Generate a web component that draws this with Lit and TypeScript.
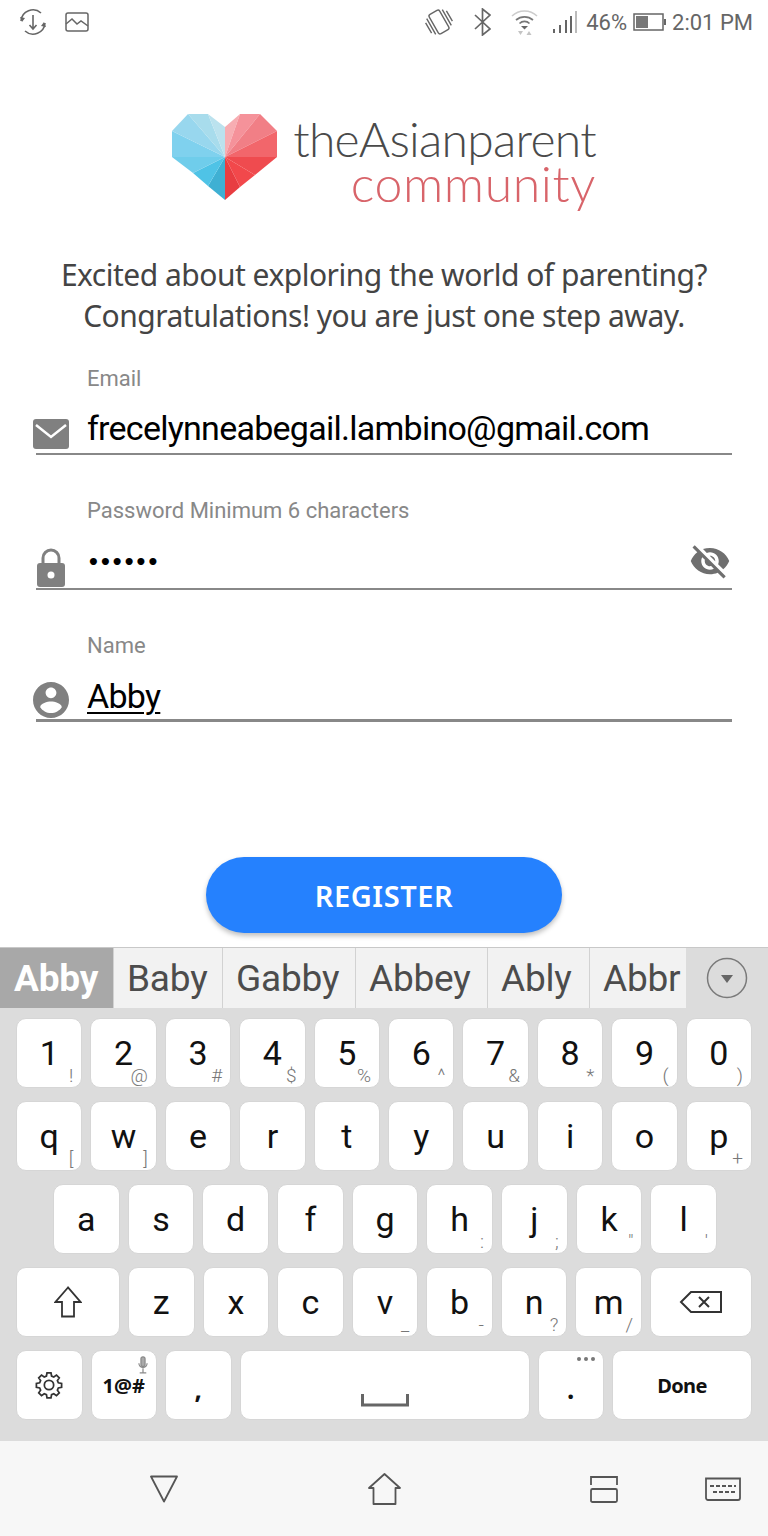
import { html, css, svg, LitElement } from "lit";
import { customElement } from "lit/decorators.js";

const leftFacets = [
  ["225,157 225,200 208,186", "#3fb0d3"],
  ["225,157 208,186 193,173", "#4fc3e6"],
  ["225,157 193,173 172,157", "#6fcdeb"],
  ["225,157 172,157 172,131", "#7fd1ee"],
  ["225,157 172,131 188,114", "#98d7ee"],
  ["225,157 188,114 208,114", "#a8dcec"],
  ["225,157 208,114 225,127", "#bbe2ee"],
];
const rightFacets = [
  ["225,157 225,127 240,114", "#f7adb2"],
  ["225,157 240,114 260,114", "#f5929a"],
  ["225,157 260,114 277,131", "#f17f86"],
  ["225,157 277,131 277,157", "#f2666b"],
  ["225,157 277,157 255,175", "#ef4b4f"],
  ["225,157 255,175 240,187", "#f2484b"],
  ["225,157 240,187 225,200", "#e83d41"],
];

const suggestions = [
  ["Baby", 109],
  ["Gabby", 133],
  ["Abbey", 132],
  ["Ably", 102],
  ["Abbr", 97],
] as const;

const numberRow = [
  ["1", "!"], ["2", "@"], ["3", "#"], ["4", "$"], ["5", "%"],
  ["6", "^"], ["7", "&"], ["8", "*"], ["9", "("], ["0", ")"],
];
const topRow = [
  ["q", "["], ["w", "]"], ["e", ""], ["r", ""], ["t", ""],
  ["y", ""], ["u", ""], ["i", ""], ["o", ""], ["p", "+"],
];
const homeRow = [
  ["a", ""], ["s", ""], ["d", ""], ["f", ""], ["g", ""],
  ["h", ":"], ["j", ";"], ["k", '"'], ["l", "'"],
];
const bottomRow = [
  ["z", ""], ["x", ""], ["c", ""], ["v", "_"],
  ["b", "-"], ["n", "?"], ["m", "/"],
];

@customElement("app-root")
export class AppRoot extends LitElement {
  static styles = css`
    :host {
      display: block;
      width: 768px;
      height: 1536px;
      background: #fff;
      font-family: Roboto, sans-serif;
      overflow: hidden;
    }

    .status {
      display: flex;
      align-items: center;
      height: 44px;
      color: #666;
      font-size: 22px;
    }
    .status svg {
      display: block;
      flex: none;
    }
    .status-left {
      display: flex;
      align-items: center;
      gap: 18px;
      padding-left: 19px;
    }
    .status-right {
      display: flex;
      align-items: center;
      margin-left: auto;
      padding-right: 15px;
    }
    .ml20 { margin-left: 20px; }
    .ml15 { margin-left: 15px; }
    .ml9 { margin-left: 9px; }
    .ml6 { margin-left: 6px; }

    .logo {
      display: flex;
      align-items: flex-start;
      padding: 68px 0 0 170px;
      height: 118px;
    }
    .logo-text {
      display: flex;
      flex-direction: column;
      align-items: flex-end;
      margin-left: 14px;
      padding-top: 5px;
      font-family: Lato, sans-serif;
      font-weight: 300;
      line-height: 44px;
      color: #4a4a4a;
      width: 302px;
    }
    .logo-text .main {
      font-size: 48px;
      letter-spacing: -0.7px;
    }
    .logo-text .sub {
      font-size: 50px;
      letter-spacing: 0.6px;
      color: #d8646a;
    }

    .intro {
      margin: 24px 0 0;
      text-align: center;
      font-family: "Noto Sans", sans-serif;
      font-size: 30px;
      letter-spacing: -0.5px;
      line-height: 41px;
      color: #444;
      height: 111px;
    }

    .form {
      display: flex;
      flex-direction: column;
      gap: 42px;
      margin: 0 36px;
    }
    .field {
      border-bottom: 2px solid #888;
    }
    .field.active {
      border-bottom-width: 3px;
    }
    .label {
      height: 28px;
      line-height: 28px;
      padding-left: 51px;
      font-size: 22px;
      color: #888;
    }
    .row {
      display: flex;
      align-items: center;
      height: 59px;
    }
    .row.first {
      height: 60px;
    }
    .row.tall {
      height: 63px;
    }
    .row svg {
      display: block;
      flex: none;
    }
    .lead {
      display: flex;
      align-self: flex-end;
      flex: none;
      width: 54px;
      margin-left: -3px;
      margin-bottom: 1px;
    }
    .first .lead {
      margin-bottom: 4px;
    }
    .value {
      flex: 1;
      padding-top: 10px;
      font-size: 34px;
      letter-spacing: -0.74px;
      color: #000;
    }
    .active .value {
      padding-top: 13px;
    }
    .value u {
      text-underline-offset: 4px;
      text-decoration-thickness: 2px;
    }
    .value.dots {
      font-size: 20px;
      letter-spacing: -0.9px;
      font-family: "DejaVu Sans", sans-serif;
      font-weight: 700;
    }
    .eye {
      margin: 8px 1px 0 0;
    }

    .submit {
      display: flex;
      justify-content: center;
      margin-top: 135px;
    }
    .submit button {
      width: 356px;
      height: 76px;
      border: none;
      border-radius: 38px;
      background: #2581fe;
      color: #fff;
      font-family: "Noto Sans", sans-serif;
      font-weight: 600;
      font-size: 29px;
      letter-spacing: 0.6px;
      box-shadow: 0 3px 5px rgba(0, 0, 0, 0.25);
    }

    .keyboard {
      margin-top: 14px;
      height: 494px;
      background: #dcdcdc;
      border-top: 1px solid #c8c8c8;
      box-sizing: border-box;
    }
    .suggestions {
      display: flex;
      align-items: stretch;
      height: 60px;
      font-size: 37px;
      letter-spacing: -0.2px;
      color: #4c4c4c;
    }
    .suggestion {
      position: relative;
      display: flex;
      align-items: center;
      box-sizing: border-box;
      padding-left: 13px;
      background: #f2f2f2;
      border-left: 1px solid #d2d2d2;
      overflow: hidden;
      white-space: nowrap;
    }
    .suggestion.current {
      width: 113px;
      padding-left: 14px;
      background: #a8a8a8;
      color: #fff;
      font-weight: 700;
      border-left: none;
    }
    .suggestion:last-of-type::after {
      content: "";
      position: absolute;
      top: 0;
      right: 0;
      bottom: 0;
      width: 14px;
      background: linear-gradient(to right, rgba(242, 242, 242, 0), #f2f2f2);
    }
    .more {
      flex: 1;
      display: flex;
      align-items: center;
      justify-content: center;
    }

    .keys {
      display: flex;
      flex-direction: column;
      gap: 13px;
      padding: 10px 16px 0;
    }
    .key-row {
      display: flex;
      gap: 8px;
      height: 70px;
    }
    .key-row.inset {
      padding: 0 35px 0 37px;
    }
    .key {
      position: relative;
      flex: 1 1 0;
      display: flex;
      align-items: center;
      justify-content: center;
      box-sizing: border-box;
      min-width: 0;
      background: #fff;
      border: 1px solid #d6d6d6;
      border-radius: 10px;
      font-size: 34px;
      color: #111;
    }
    .key.shift { flex: none; width: 104px; }
    .key.back { flex: none; width: 102px; }
    .key.space { flex: none; width: 290px; }
    .key.done { flex: none; width: 140px; letter-spacing: -0.6px; }
    .key.bold {
      font-family: "Noto Sans", sans-serif;
      font-size: 20px;
      font-weight: 700;
    }
    .key.mark {
      align-items: flex-end;
      padding-bottom: 12px;
      font-family: "Noto Sans", sans-serif;
      font-size: 26px;
      font-weight: 700;
    }
    .legend {
      position: absolute;
      right: 8px;
      bottom: 0;
      font-size: 19px;
      font-weight: 300;
      color: #777;
    }
    .corner {
      position: absolute;
      top: 5px;
      right: 7px;
      display: block;
    }
    .space-mark {
      position: absolute;
      left: 120px;
      bottom: 12px;
      display: block;
    }

    .nav {
      display: flex;
      align-items: center;
      height: 95px;
      padding-left: 150px;
      background: #f7f7f7;
    }
    .nav svg {
      display: block;
      flex: none;
    }
    .nav .to-home { margin-left: 190px; }
    .nav .to-recent { margin-left: 189px; }
    .nav .to-kbd { margin-left: 87px; }
  `;

  renderHeart() {
    return html`<svg width="110" height="90" viewBox="170 112 110 90">
      ${[...leftFacets, ...rightFacets].map(
        ([points, fill]) => svg`<polygon points="${points}" fill="${fill}" />`,
      )}
    </svg>`;
  }

  renderKey([label, legend]: string[]) {
    return html`<div class="key">
      ${label}${legend ? html`<span class="legend">${legend}</span>` : ""}
    </div>`;
  }

  render() {
    return html`
      <div class="status">
        <div class="status-left">
          <svg width="28" height="28" viewBox="0 0 28 28" fill="none" stroke="#666" stroke-width="1.600">
            <path d="M2 13a12 12 0 0 1 20-8M26 15a12 12 0 0 1-20 8" />
            <path d="M14 7v14M10.500 17l3.500 4 3.500-4" />
            <path d="M1 9l5 1-3 4zM27 19l-5-1 3-4z" fill="#666" stroke="none" />
          </svg>
          <svg width="24" height="20" viewBox="0 0 24 20" fill="none" stroke="#666" stroke-width="1.500">
            <rect x="1" y="1" width="22" height="18" rx="2" />
            <path d="M1 12l6-5 5 5 4-3 7 5" />
          </svg>
        </div>
        <div class="status-right">
          <svg width="30" height="30" viewBox="0 0 30 30" fill="none" stroke="#666" stroke-width="1.400">
            <g transform="rotate(-30 15 15)">
              <rect x="9" y="4" width="12" height="22" rx="2" />
              <path d="M6 6v18M3 9v12M24 6v18M27 9v12" />
            </g>
          </svg>
          <svg class="ml20" width="17" height="28" viewBox="0 0 17 28" fill="none" stroke="#666" stroke-width="1.700">
            <path d="M1 7l15 14-7.500 6V1L16 7 1 21" />
          </svg>
          <svg class="ml20" width="27" height="26" viewBox="0 0 27 26" fill="none">
            <path d="M1 7a18 18 0 0 1 25 0" stroke="#ccc" stroke-width="1.500" />
            <path d="M5 11a13 13 0 0 1 17 0" stroke="#777" stroke-width="1.700" />
            <path d="M8.500 14.500a7 7 0 0 1 10 0" stroke="#777" stroke-width="1.700" />
            <path d="M10 17h7l-3.500 3.500z" fill="#666" />
            <path d="M7 22h5l-2.500 4zM18 22l2.500 4h-5z" fill="#c4c4c4" />
          </svg>
          <svg class="ml15" width="24" height="22" viewBox="0 0 24 22" fill="#666">
            <rect x="0" y="18" width="2" height="4" />
            <rect x="6" y="14" width="2" height="8" />
            <rect x="12" y="9" width="2" height="13" />
            <rect x="17" y="5" width="2" height="17" />
            <rect x="22" y="0" width="2" height="22" fill="#bbb" />
          </svg>
          <span class="ml9">46%</span>
          <svg class="ml6" width="33" height="18" viewBox="0 0 33 18" fill="none">
            <rect x="1" y="1" width="29" height="16" stroke="#666" stroke-width="1.500" />
            <rect x="3" y="3" width="12" height="12" fill="#777" />
            <rect x="31" y="6" width="2" height="6" fill="#666" />
          </svg>
          <span class="ml6">2:01 PM</span>
        </div>
      </div>

      <div class="logo">
        ${this.renderHeart()}
        <div class="logo-text">
          <span class="main">theAsianparent</span>
          <span class="sub">community</span>
        </div>
      </div>

      <p class="intro">
        Excited about exploring the world of parenting?<br />
        Congratulations! you are just one step away.
      </p>

      <div class="form">
        <div class="field">
          <div class="label">Email</div>
          <div class="row first">
            <div class="lead">
              <svg width="36" height="30" viewBox="0 0 36 30">
                <rect width="36" height="30" rx="3" fill="#808080" />
                <path d="M3 6l15 12L33 6" fill="none" stroke="#fff" stroke-width="2.500" />
              </svg>
            </div>
            <div class="value">frecelynneabegail.lambino@gmail.com</div>
          </div>
        </div>
        <div class="field">
          <div class="label">Password Minimum 6 characters</div>
          <div class="row tall">
            <div class="lead">
              <svg width="36" height="39" viewBox="0 0 36 39">
                <path d="M10 17V10a8 8 0 0 1 16 0v7" fill="none" stroke="#808080" stroke-width="3" />
                <rect x="4" y="15" width="28" height="24" rx="3" fill="#808080" />
                <circle cx="18" cy="27" r="3.500" fill="#fff" />
              </svg>
            </div>
            <div class="value dots">••••••</div>
            <svg class="eye" width="42" height="42" viewBox="0 0 24 24" fill="#6f6f6f">
              <path d="M12 7c2.760 0 5 2.240 5 5 0 .65-.13 1.260-.36 1.830l2.920 2.920c1.510-1.260 2.700-2.890 3.430-4.750-1.730-4.390-6-7.500-11-7.500-1.400 0-2.740.25-3.980.7l2.160 2.160C10.740 7.130 11.350 7 12 7zM2 4.270l2.280 2.280.46.46C3.080 8.300 1.780 10.020 1 12c1.730 4.390 6 7.500 11 7.500 1.550 0 3.030-.3 4.380-.84l.42.42L19.730 22 21 20.730 3.270 3 2 4.270zM7.530 9.800l1.550 1.550c-.05.21-.08.43-.08.65 0 1.660 1.340 3 3 3 .22 0 .44-.03.65-.08l1.550 1.550c-.67.33-1.410.53-2.200.53-2.760 0-5-2.240-5-5 0-.79.2-1.530.53-2.200zm4.310-.78l3.150 3.150.02-.16c0-1.660-1.340-3-3-3l-.17.01z" />
            </svg>
          </div>
        </div>
        <div class="field active">
          <div class="label">Name</div>
          <div class="row">
            <div class="lead">
              <svg width="36" height="36" viewBox="2 2 20 20" fill="#808080">
                <path d="M12 2C6.480 2 2 6.480 2 12s4.480 10 10 10 10-4.480 10-10S17.520 2 12 2zm0 3c1.660 0 3 1.340 3 3s-1.340 3-3 3-3-1.340-3-3 1.340-3 3-3zm0 14.200c-2.500 0-4.710-1.280-6-3.220.03-1.990 4-3.080 6-3.080 1.990 0 5.970 1.090 6 3.080-1.290 1.940-3.500 3.220-6 3.220z" />
              </svg>
            </div>
            <div class="value"><u>Abby</u></div>
          </div>
        </div>
      </div>

      <div class="submit"><button>REGISTER</button></div>

      <div class="keyboard">
        <div class="suggestions">
          <div class="suggestion current">Abby</div>
          ${suggestions.map(
            ([word, width]) =>
              html`<div class="suggestion" style="width: ${width}px">${word}</div>`,
          )}
          <div class="more">
            <svg width="42" height="42" viewBox="0 0 42 42" fill="none">
              <circle cx="21" cy="21" r="19.500" stroke="#7a7a7a" stroke-width="1.500" />
              <path d="M15 18h12l-6 8z" fill="#666" />
            </svg>
          </div>
        </div>

        <div class="keys">
          <div class="key-row">${numberRow.map((k) => this.renderKey(k))}</div>
          <div class="key-row">${topRow.map((k) => this.renderKey(k))}</div>
          <div class="key-row inset">${homeRow.map((k) => this.renderKey(k))}</div>
          <div class="key-row">
            <div class="key shift">
              <svg width="28" height="32" viewBox="0 0 28 32" fill="none" stroke="#333" stroke-width="1.800">
                <path d="M14 1.500L1.500 16H8v14.500h12V16h6.500z" />
              </svg>
            </div>
            ${bottomRow.map((k) => this.renderKey(k))}
            <div class="key back">
              <svg width="44" height="24" viewBox="0 0 44 24" fill="none" stroke="#333" stroke-width="2">
                <path d="M12 2h30v20H12L2 12z" />
                <path d="M20 7l10 10M30 7L20 17" />
              </svg>
            </div>
          </div>
          <div class="key-row">
            <div class="key">
              <svg width="28" height="28" viewBox="0 0 24 24" fill="none" stroke="#333" stroke-width="1.500">
                <path d="M10.300 1.500h3.400l.5 2.800 1.900.8 2.300-1.600 2.400 2.400-1.600 2.300.8 1.900 2.800.5v3.400l-2.800.5-.8 1.900 1.600 2.300-2.400 2.400-2.300-1.600-1.900.8-.5 2.800h-3.400l-.5-2.800-1.900-.8-2.300 1.600-2.400-2.400 1.600-2.300-.8-1.900-2.800-.5v-3.400l2.800-.5.8-1.900-1.600-2.300 2.400-2.400 2.300 1.600 1.900-.8z" />
                <circle cx="12" cy="12" r="4" />
              </svg>
            </div>
            <div class="key bold">
              1@#
              <svg class="corner" width="12" height="18" viewBox="0 0 12 22" fill="none" stroke="#8a8a8a" stroke-width="1.500">
                <rect x="3.500" y="1" width="5" height="12" rx="2.500" fill="#aaa" />
                <path d="M1 9a5 5 0 0 0 10 0M6 15v5M2 20.500h8" />
              </svg>
            </div>
            <div class="key mark">,</div>
            <div class="key space">
              <svg class="space-mark" width="48" height="13" viewBox="0 0 48 13" fill="none" stroke="#666" stroke-width="3">
                <path d="M1.500 0v11h45V0" />
              </svg>
            </div>
            <div class="key mark">
              .
              <svg class="corner" width="20" height="6" viewBox="0 0 20 6" fill="#777">
                <circle cx="3" cy="3" r="2" />
                <circle cx="10" cy="3" r="2" />
                <circle cx="17" cy="3" r="2" />
              </svg>
            </div>
            <div class="key bold done">Done</div>
          </div>
        </div>
      </div>

      <div class="nav">
        <svg width="28" height="28" viewBox="0 0 28 28" fill="none" stroke="#555" stroke-width="1.800" stroke-linejoin="round">
          <path d="M1 1.500h26L14 26.500z" />
        </svg>
        <svg class="to-home" width="33" height="32" viewBox="0 0 33 32" fill="none" stroke="#555" stroke-width="1.800" stroke-linejoin="round">
          <path d="M1 15L16.500 1 32 15h-4.500v16h-22V15z" />
        </svg>
        <svg class="to-recent" width="28" height="28" viewBox="0 0 28 28" fill="none" stroke="#555" stroke-width="1.800">
          <path d="M1 10V2h26v8" />
          <rect x="1" y="14" width="26" height="13" rx="1.500" />
        </svg>
        <svg class="to-kbd" width="36" height="24" viewBox="0 0 36 24" fill="none" stroke="#555" stroke-width="1.800">
          <path d="M1 1.500h34V21a2 2 0 0 1-2 2H3a2 2 0 0 1-2-2z" />
          <path d="M5 9h26M8 15h22" stroke-dasharray="4 2" />
        </svg>
      </div>
    `;
  }
}
